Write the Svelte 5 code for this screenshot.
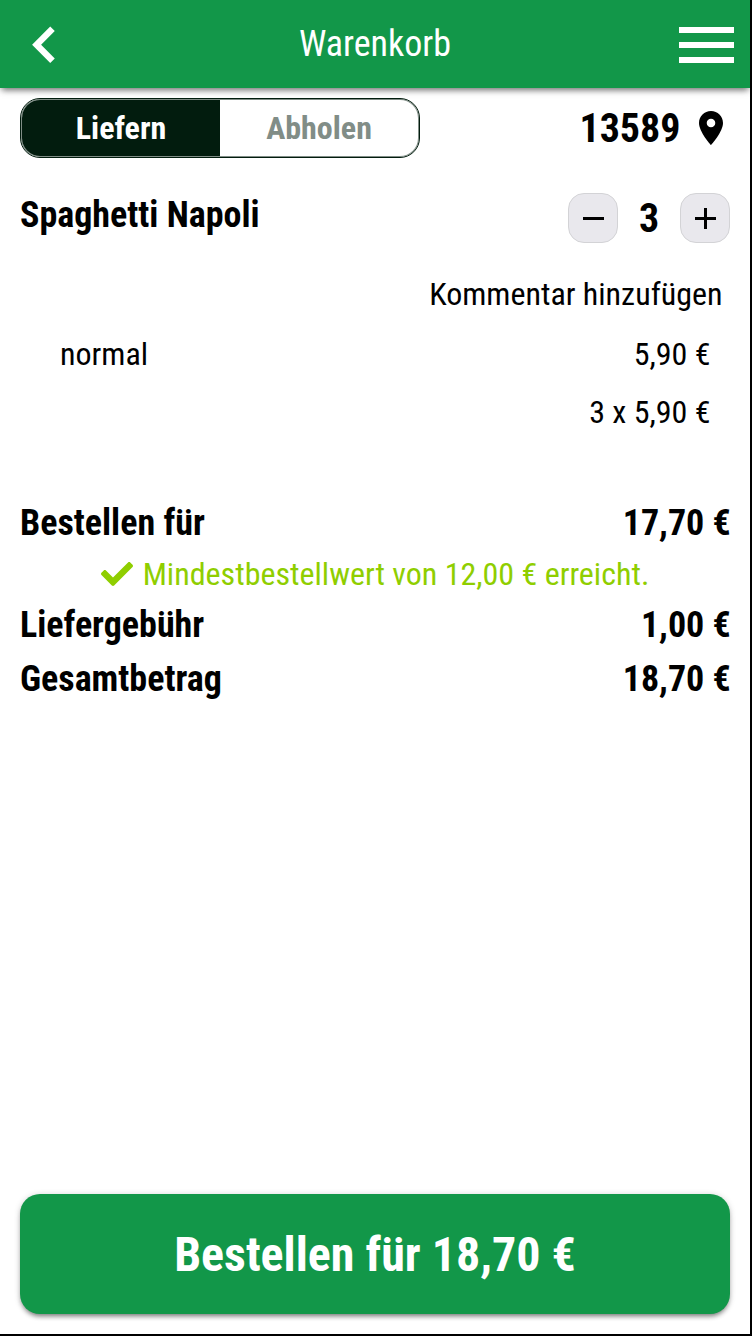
<script>
  let mode = $state('liefern');
  let count = $state(3);

  const zip = '13589';
  const price = 5.9;
  const fee = 1;
  const minimum = 12;

  let subtotal = $derived(count * price);
  let total = $derived(subtotal + fee);

  const euro = (n) => n.toFixed(2).replace('.', ',') + ' €';
</script>

<div class="screen">
  <header>
    <button class="back" aria-label="Zurück">
      <svg width="24" height="38" viewBox="0 0 24 38"><path d="M20.5 2.8 L4.6 18.8 L20.5 34.8" /></svg>
    </button>
    <h1>Warenkorb</h1>
    <button class="menu" aria-label="Menü"><i></i><i></i><i></i></button>
  </header>

  <main>
    <div class="row top">
      <div class="toggle">
        <button class:active={mode === 'liefern'} onclick={() => (mode = 'liefern')}>Liefern</button>
        <button class:active={mode === 'abholen'} onclick={() => (mode = 'abholen')}>Abholen</button>
      </div>
      <div class="zip">
        <span>{zip}</span>
        <svg width="24" height="34" viewBox="5 2 14 20" preserveAspectRatio="none">
          <path d="M12 2C8.13 2 5 5.13 5 9c0 5.25 7 13 7 13s7-7.75 7-13c0-3.87-3.13-7-7-7zm0 9.5c-1.38 0-2.5-1.12-2.5-2.5s1.12-2.5 2.5-2.5 2.5 1.12 2.5 2.5-1.12 2.5-2.5 2.5z" />
        </svg>
      </div>
    </div>

    <div class="row item">
      <h2>Spaghetti Napoli</h2>
      <div class="stepper">
        <button aria-label="Weniger" onclick={() => (count = Math.max(0, count - 1))}>
          <svg width="22" height="22"><path d="M1 11.5H22" /></svg>
        </button>
        <b>{count}</b>
        <button aria-label="Mehr" onclick={() => count++}>
          <svg width="22" height="22"><path d="M1 11.5H22M11.5 1V22" /></svg>
        </button>
      </div>
    </div>

    <div class="comment">Kommentar hinzufügen</div>
    <div class="row detail"><span>normal</span><span>{euro(price)}</span></div>
    <div class="row detail last"><span></span><span>{count} x {euro(price)}</span></div>

    <div class="row sum"><span>Bestellen für</span><span>{euro(subtotal)}</span></div>
    {#if subtotal >= minimum}
      <div class="hint">
        <svg width="32" height="32" viewBox="0 0 512 512">
          <path d="M173.9 439.4l-166.4-166.4c-10-10-10-26.2 0-36.2l36.2-36.2c10-10 26.2-10 36.2 0L192 312.7 432.1 72.6c10-10 26.2-10 36.2 0l36.2 36.2c10 10 10 26.2 0 36.2l-294.4 294.4c-10 10-26.2 10-36.2 0z" />
        </svg>
        <span>Mindestbestellwert von {euro(minimum)} erreicht.</span>
      </div>
    {/if}
    <div class="row sum"><span>Liefergebühr</span><span>{euro(fee)}</span></div>
    <div class="row sum"><span>Gesamtbetrag</span><span>{euro(total)}</span></div>
  </main>

  <footer>
    <button class="order">Bestellen für {euro(total)}</button>
  </footer>
</div>

<style>
  :global(body) { margin: 0; background: #fff; }
  .screen {
    box-sizing: border-box;
    width: 752px;
    height: 1336px;
    display: flex;
    flex-direction: column;
    overflow: hidden;
    background: #fff;
    border-right: 2px solid #000;
    border-bottom: 2px solid #000;
    color: #000;
    font-family: "Roboto Condensed", Roboto, sans-serif;
    font-stretch: 75%;
    font-size: 32px;
  }
  button {
    margin: 0;
    padding: 0;
    border: 0;
    background: none;
    color: inherit;
    font: inherit;
    font-stretch: inherit;
  }
  svg { display: block; }
  header {
    display: grid;
    grid-template-columns: 72px 1fr 72px;
    align-items: center;
    height: 88px;
    flex: none;
    background: #129749;
    color: #fff;
    box-shadow: 0 4px 6px -2px rgb(0 0 0 / 0.5), 0 2px 8px rgb(0 0 0 / 0.12);
  }
  .back { padding: 2px 0 0 31.5px; }
  .back path { fill: none; stroke: #fff; stroke-width: 6.4; }
  h1 {
    margin: 0;
    text-align: center;
    font-size: 36px;
    font-weight: 400;
  }
  .menu {
    display: flex;
    flex-direction: column;
    gap: 9px;
    padding: 2px 0 0 1px;
  }
  .menu i { width: 55px; height: 6px; background: #fff; }

  main { flex: 1; padding: 10px 20px 0; }
  .row {
    display: flex;
    justify-content: space-between;
    align-items: center;
  }
  .toggle {
    box-sizing: border-box;
    display: flex;
    width: 400px;
    height: 60px;
    padding: 1px;
    border: 1px solid #021c0e;
    border-radius: 20px;
    box-shadow: inset 0 0 0 1px rgb(2 28 14 / 0.5);
  }
  .toggle button {
    flex: 1;
    border-radius: 0 18px 18px 0;
    color: #818d87;
    font-weight: 700;
  }
  .toggle button:first-child { flex: 0 0 198px; border-radius: 18px 0 0 18px; }
  .toggle .active { background: #021c0e; color: #fff; }
  .zip {
    display: flex;
    align-items: center;
    gap: 18px;
    padding-right: 7.5px;
    font-size: 40px;
    font-weight: 700;
  }
  .item { height: 50px; margin-top: 35px; }
  h2 {
    margin: 0;
    padding-bottom: 6px;
    font-size: 36px;
    font-weight: 700;
  }
  .stepper { display: flex; align-items: center; }
  .stepper b { width: 62px; text-align: center; font-size: 40px; }
  .stepper button {
    box-sizing: border-box;
    display: grid;
    place-items: center;
    width: 50px;
    height: 50px;
    border: 1.5px solid #d3d3d6;
    border-radius: 16px;
    background: #e9e8ed;
  }
  .stepper path { stroke: #000; stroke-width: 3; }
  .comment {
    margin-top: 21px;
    padding-right: 7.5px;
    line-height: 60px;
    text-align: right;
  }
  .detail { height: 60px; padding: 0 19.5px 0 40px; }
  .last { height: 56px; margin-bottom: 56px; }
  .sum {
    height: 54px;
    margin-right: -0.8px;
    font-size: 36px;
    font-weight: 700;
  }
  .hint {
    display: flex;
    align-items: center;
    justify-content: center;
    gap: 10px;
    height: 48px;
    color: #8fce00;
  }
  .hint path { fill: currentColor; }
  footer { padding: 0 20px 20px; }
  .order {
    display: block;
    width: 100%;
    height: 120px;
    border-radius: 20px;
    background: #129749;
    box-shadow: 0 4px 5px -2px rgb(0 0 0 / 0.45), 0 1px 6px rgb(0 0 0 / 0.2);
    color: #fff;
    font-size: 48px;
    font-weight: 700;
  }
</style>
